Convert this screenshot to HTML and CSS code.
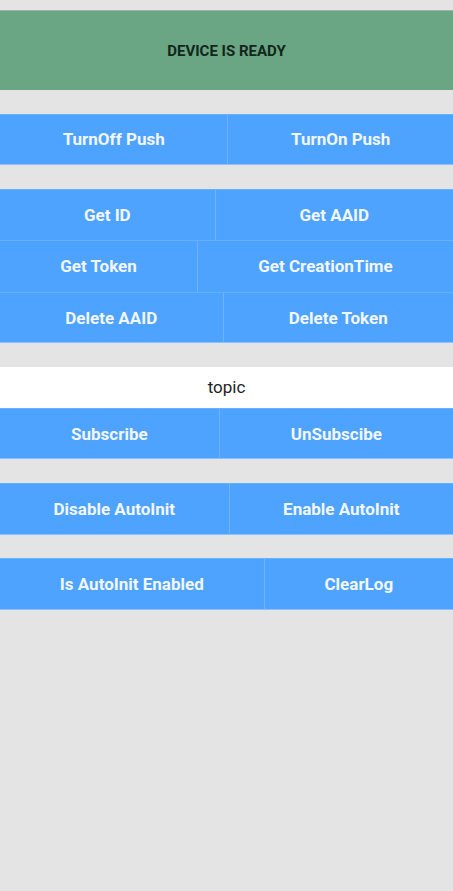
FILE: index.html
```html
<!DOCTYPE html>
<html>
<head>
<meta charset="utf-8">
<link rel="stylesheet" href="styles.css">
</head>
<body>
<div class="app">
  <div class="banner">DEVICE IS READY</div>

  <div class="group">
    <div class="row"><div class="btn">TurnOff Push</div><div class="btn">TurnOn Push</div></div>
  </div>

  <div class="group">
    <div class="row"><div class="btn">Get ID</div><div class="btn">Get AAID</div></div>
    <div class="row"><div class="btn">Get Token</div><div class="btn">Get CreationTime</div></div>
    <div class="row"><div class="btn">Delete AAID</div><div class="btn">Delete Token</div></div>
  </div>

  <div class="group">
    <div class="topic">topic</div>
    <div class="row"><div class="btn">Subscribe</div><div class="btn">UnSubscibe</div></div>
  </div>

  <div class="group">
    <div class="row"><div class="btn">Disable AutoInit</div><div class="btn">Enable AutoInit</div></div>
  </div>

  <div class="group">
    <div class="row"><div class="btn">Is AutoInit Enabled</div><div class="btn">ClearLog</div></div>
  </div>
</div>
</body>
</html>
```

FILE: styles.css
```css
html, body {
  margin: 0;
  padding: 0;
  background: #e4e4e4;
  font-family: Roboto, "Liberation Sans", sans-serif;
}
.app {
  padding-top: 10px;
  display: flex;
  flex-direction: column;
}
.banner {
  height: 79px;
  border-top: 1px solid #a7aeaa;
  background: #6aa584;
  color: #13261a;
  font-size: 15px;
  font-weight: 700;
  display: flex;
  align-items: center;
  justify-content: center;
}
.group {
  margin-top: 23.5px;
  display: flex;
  flex-direction: column;
}
.row {
  display: flex;
  height: 51.6px;
}
.btn {
  flex: 1 1 auto;
  box-sizing: border-box;
  padding: 0 8px;
  background: #4ea3ff;
  color: #f2f6ff;
  font-size: 17px;
  font-weight: 700;
  display: flex;
  align-items: center;
  justify-content: center;
  white-space: nowrap;
  border-top: 1px solid #67b0ff;
}
.btn + .btn {
  border-left: 1px solid #6eb3ff;
}
.row:last-child .btn {
  border-bottom: 1px solid #8cc2fb;
}
.topic {
  height: 41px;
  background: #ffffff;
  color: #1e1e1e;
  font-size: 17px;
  display: flex;
  align-items: center;
  justify-content: center;
}
```
